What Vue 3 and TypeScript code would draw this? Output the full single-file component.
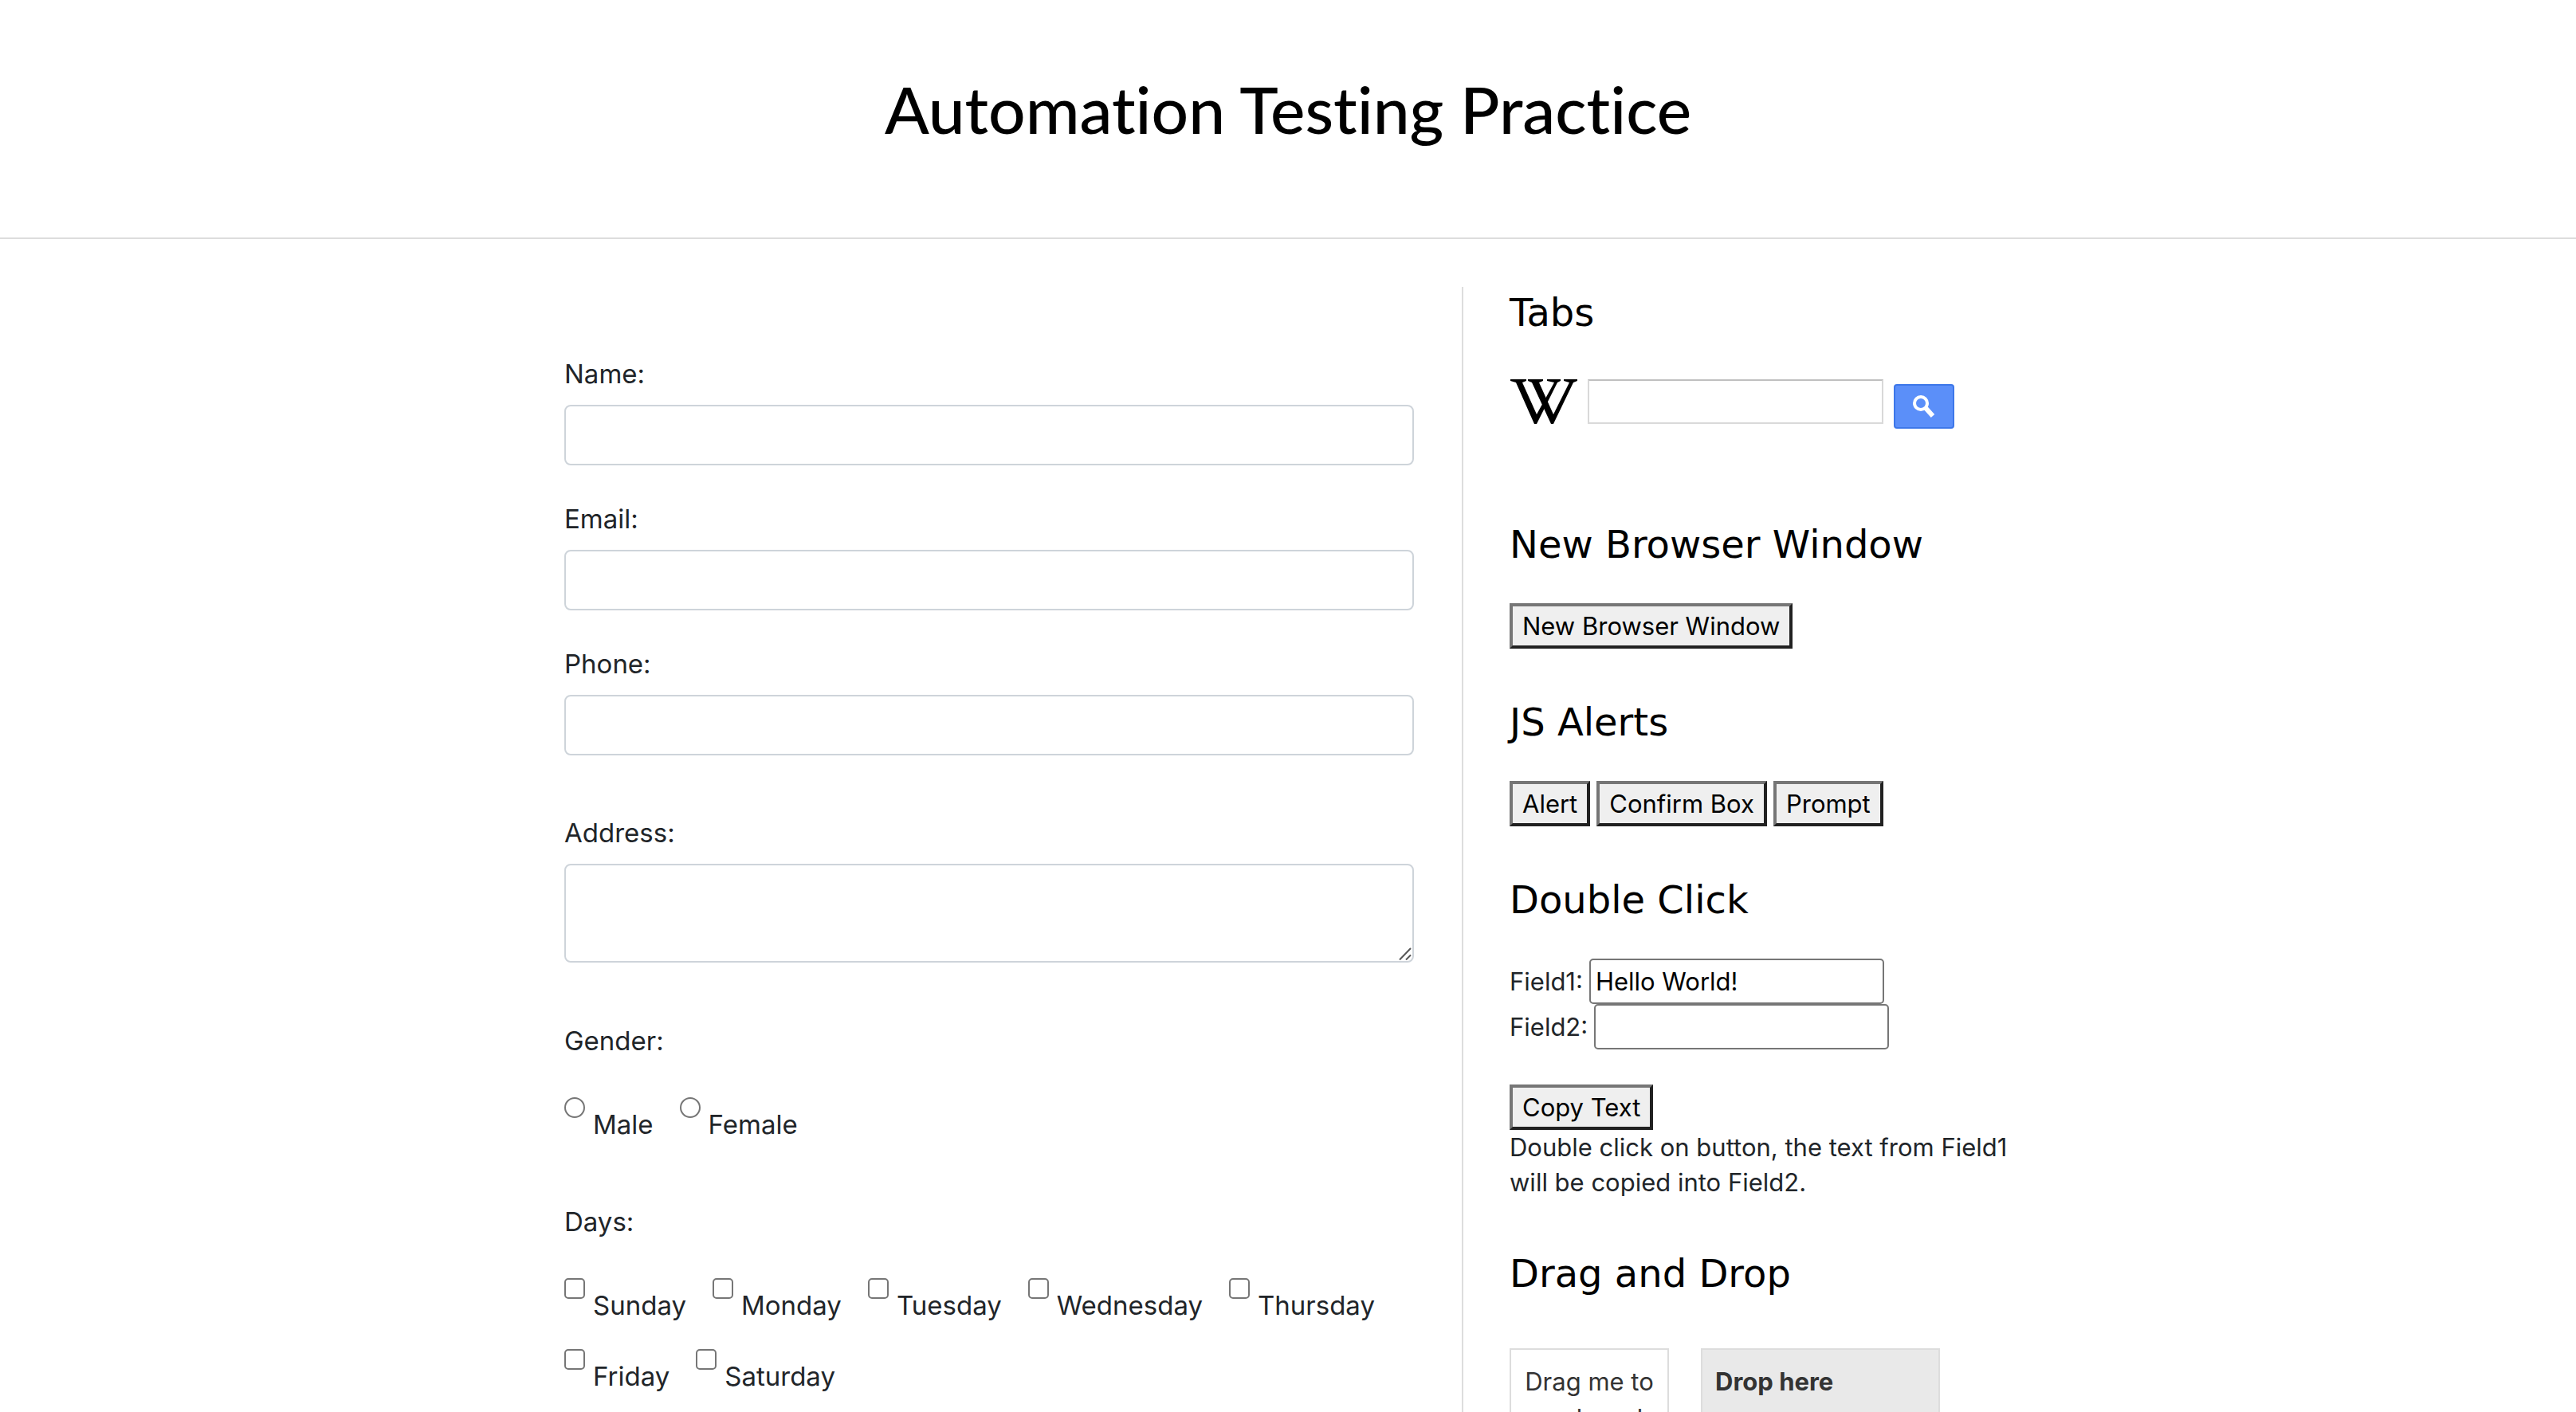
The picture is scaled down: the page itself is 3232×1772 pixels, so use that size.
<script setup lang="ts">
import { ref } from 'vue'

interface TextField {
  id: string
  label: string
  type: string
}

const fields: TextField[] = [
  { id: 'name', label: 'Name:', type: 'text' },
  { id: 'email', label: 'Email:', type: 'email' },
  { id: 'phone', label: 'Phone:', type: 'tel' },
]

const genders: string[] = ['Male', 'Female']
const days: string[] = ['Sunday', 'Monday', 'Tuesday', 'Wednesday', 'Thursday', 'Friday', 'Saturday']

const field1 = ref('Hello World!')
const field2 = ref('')

function copyText(): void {
  field2.value = field1.value
}
</script>

<template>
  <div class="page">
    <header class="header">
      <h1 class="title">Automation Testing Practice</h1>
    </header>

    <div class="content">
      <main class="main">
        <form class="form" @submit.prevent>
          <div v-for="f in fields" :key="f.id" class="group">
            <label class="label" :for="f.id">{{ f.label }}</label>
            <input :id="f.id" class="control" :type="f.type" />
          </div>

          <div class="group group-area">
            <label class="label" for="address">Address:</label>
            <div class="area-wrap">
              <textarea id="address" class="control area"></textarea>
              <svg class="grip" viewBox="0 0 16 16" aria-hidden="true">
                <path d="M1 15.500L15 1M9 15.500L15 9.500" />
              </svg>
            </div>
          </div>

          <fieldset class="choices">
            <legend class="label">Gender:</legend>
            <div class="options">
              <label v-for="g in genders" :key="g" class="option">
                <input class="mark round" type="radio" name="gender" :value="g" />
                <span class="option-text">{{ g }}</span>
              </label>
            </div>
          </fieldset>

          <fieldset class="choices">
            <legend class="label">Days:</legend>
            <div class="options">
              <label v-for="d in days" :key="d" class="option">
                <input class="mark" type="checkbox" :value="d" />
                <span class="option-text">{{ d }}</span>
              </label>
            </div>
          </fieldset>
        </form>
      </main>

      <aside class="sidebar">
        <section class="widget widget-search">
          <h2 class="heading">Tabs</h2>
          <form class="search" @submit.prevent>
            <svg class="logo" viewBox="0 0 86 56" role="img" aria-label="Wikipedia">
              <path d="M1 0H21V2L16 4L34 44L56 4L47 2V0H64V2L60 4L34 56H31L8 4L1 2Z" />
              <path d="M23 0H42V2L37 4L55 44L75 4L68 2V0H85V2L80 4L55 56H52L28 4L23 2Z" />
            </svg>
            <input class="search-box" type="text" aria-label="Search Wikipedia" />
            <button class="search-button" type="submit" aria-label="Search">
              <svg class="glass" viewBox="0 0 28 30">
                <circle cx="10" cy="11" r="8" />
                <path d="M16 17L25 27" />
              </svg>
            </button>
          </form>
        </section>

        <section class="widget">
          <h2 class="heading">New Browser Window</h2>
          <div class="buttons">
            <button class="button" type="button">New Browser Window</button>
          </div>
        </section>

        <section class="widget">
          <h2 class="heading">JS Alerts</h2>
          <div class="buttons">
            <button class="button" type="button">Alert</button>
            <button class="button" type="button">Confirm Box</button>
            <button class="button" type="button">Prompt</button>
          </div>
        </section>

        <section class="widget">
          <h2 class="heading">Double Click</h2>
          <div class="pair">
            <label for="field1">Field1:</label>
            <input id="field1" v-model="field1" class="small-box" type="text" />
          </div>
          <div class="pair">
            <label for="field2">Field2:</label>
            <input id="field2" v-model="field2" class="small-box" type="text" />
          </div>
          <button class="button copy" type="button" @dblclick="copyText">Copy Text</button>
          <p class="note">Double click on button, the text from Field1 will be copied into Field2.</p>
        </section>

        <section class="widget">
          <h2 class="heading">Drag and Drop</h2>
          <div class="boxes">
            <div class="drag" draggable="true">Drag me to my target</div>
            <div class="drop">Drop here</div>
          </div>
        </section>
      </aside>
    </div>
  </div>
</template>

<style>
body {
  background: #fff;
}
</style>

<style scoped>
.page {
  height: 100vh;
  overflow: hidden;
  font-family: Inter, 'Liberation Sans', sans-serif;
  color: #212529;
}

.header {
  padding: 76px 0 102px;
  border-bottom: 2px solid #ddd;
}

.title {
  margin: 0;
  font: 500 82px/120px Lato, sans-serif;
  font-variant-ligatures: none;
  text-align: center;
  color: #000;
}

.content {
  display: flex;
  gap: 60px;
  max-width: 1816px;
  margin: 60px auto 0;
}

.main {
  flex: 1;
  padding-top: 84px;
}

.group {
  display: flex;
  flex-direction: column;
  gap: 14px;
  margin-bottom: 42px;
}

.group-area {
  margin-top: 72px;
  margin-bottom: 73px;
}

.label {
  padding: 0;
  font-size: 33px;
  line-height: 50px;
}

.control {
  box-sizing: border-box;
  width: 100%;
  height: 76px;
  padding: 12px 24px;
  border: 2px solid #ced4da;
  border-radius: 8px;
  background: #fff;
  font: inherit;
  font-size: 33px;
}

.area-wrap {
  position: relative;
}

.area {
  display: block;
  height: 124px;
  resize: none;
}

.grip {
  position: absolute;
  right: 3px;
  bottom: 3px;
  width: 16px;
  height: 16px;
  fill: none;
  stroke: #555;
  stroke-width: 2;
}

.choices {
  margin: 0 0 72px;
  padding: 0;
  border: 0;
}

.options {
  display: flex;
  flex-wrap: wrap;
  gap: 30px 33px;
  margin-top: 46px;
}

.option {
  display: flex;
  gap: 10px;
  height: 59px;
}

.mark {
  appearance: none;
  width: 26px;
  height: 26px;
  margin: 0;
  border: 2px solid #767676;
  border-radius: 5px;
  background: #fff;
}

.round {
  border-radius: 50%;
}

.option-text {
  align-self: flex-end;
  font-size: 33px;
  line-height: 50px;
}

.sidebar {
  width: 630px;
  padding-left: 58px;
  border-left: 2px solid #ddd;
  font-size: 31px;
  line-height: 44px;
}

.widget {
  margin-bottom: 60px;
}

.widget-search {
  margin-bottom: 113px;
}

.heading {
  margin: 0 0 42px;
  font: 400 48px/64px 'DejaVu Sans', Verdana, sans-serif;
  color: #000;
}

.search {
  display: flex;
  align-items: flex-start;
  padding-top: 10px;
}

.logo {
  width: 86px;
  height: 56px;
  margin-right: 12px;
}

.search-box {
  box-sizing: border-box;
  width: 371px;
  height: 56px;
  margin-right: 13px;
  border: 2px solid #d9d9d9;
  border-top-color: #c0c0c0;
  background: #fff;
  font: inherit;
}

.search-button {
  display: flex;
  align-items: center;
  justify-content: center;
  width: 76px;
  height: 56px;
  margin-top: 6px;
  padding: 0;
  border: 2px solid #3d77e9;
  border-radius: 4px;
  background: #5b8ff9;
}

.glass {
  width: 28px;
  height: 30px;
  fill: none;
  stroke: #fff;
  stroke-width: 4;
}

.glass path {
  stroke-width: 6;
}

.buttons {
  display: flex;
  gap: 8px;
}

.button {
  height: 57px;
  padding: 0 12px;
  border: 4px solid;
  border-color: #767676 #212121 #212121 #767676;
  background: #efefef;
  font: inherit;
  color: #000;
}

.pair {
  display: flex;
  align-items: center;
  gap: 8px;
}

.small-box {
  box-sizing: border-box;
  width: 370px;
  height: 57px;
  padding: 2px 6px;
  border: 2px solid #767676;
  border-radius: 5px;
  background: #fff;
  font: inherit;
  color: #000;
}

.copy {
  display: block;
  margin-top: 44px;
}

.note {
  margin: 0;
}

.boxes {
  display: flex;
  gap: 40px;
  padding-top: 20px;
  color: #333;
}

.drag,
.drop {
  box-sizing: border-box;
  height: 200px;
  padding: 18px 16px;
  border: 2px solid #ddd;
}

.drag {
  width: 200px;
  text-align: center;
}

.drop {
  width: 300px;
  background: #e9e9e9;
  font-weight: 700;
}
</style>
